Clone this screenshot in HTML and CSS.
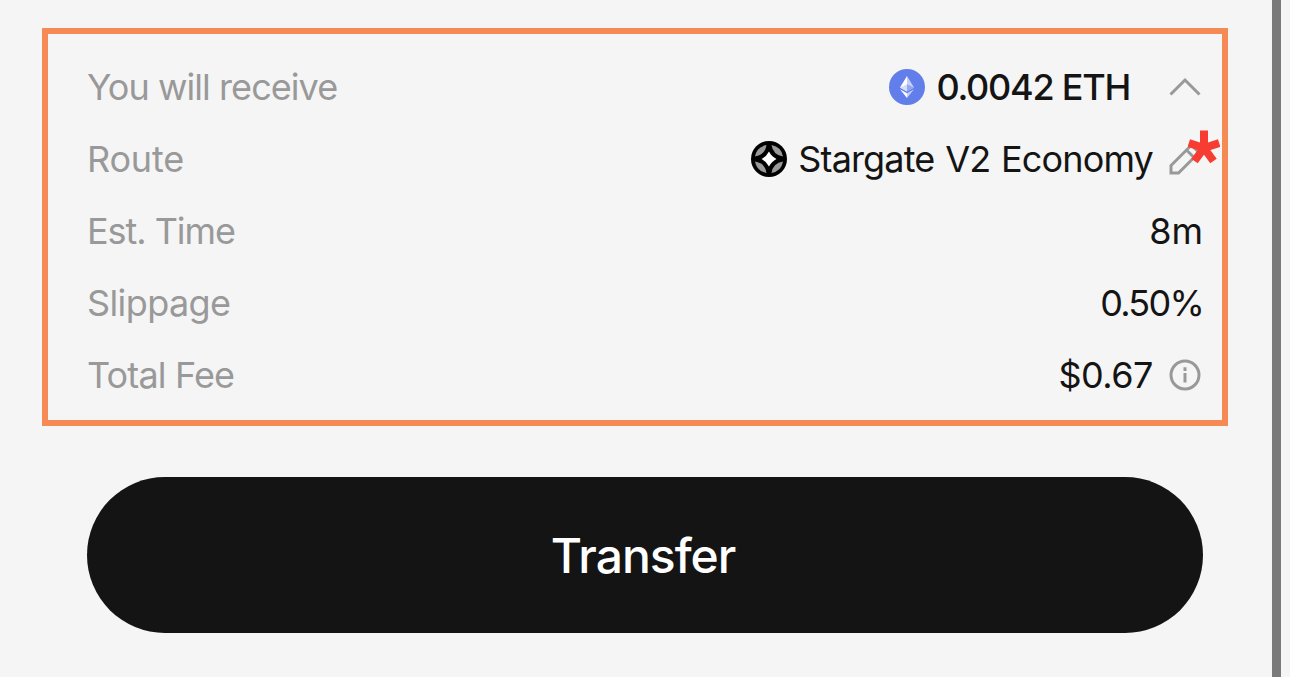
FILE: index.html
```html
<!DOCTYPE html>
<html lang="en">
<head>
<meta charset="UTF-8">
<title>Transfer</title>
<meta name="viewport" content="width=device-width, initial-scale=1.0">
<link rel="stylesheet" href="styles.css">
</head>
<body>
<div class="page">
<main class="panel">

<section class="details">
<div class="row">
  <span class="label receive">You will receive</span>
  <span class="value">
    <svg class="coin" viewBox="0 0 36 36">
      <circle cx="18" cy="18" r="18" fill="#627eea"/>
      <path d="M18 7L11 18.500 18 22.500z" fill="#fff"/>
      <path d="M18 7l7 11.500-7 4z" fill="#c5d0f8"/>
      <path d="M11 18.500l7-3.200v7.200z" fill="#d5ddfa"/>
      <path d="M25 18.500l-7-3.200v7.200z" fill="#92a6f1"/>
      <path d="M11 20.200l7 4v4.800z" fill="#fff"/>
      <path d="M25 20.200l-7 4v4.800z" fill="#c5d0f8"/>
    </svg>
    <span class="eth">0.0042 ETH</span>
    <svg class="icon chevron" viewBox="0 0 36 36"><path d="M3.500 25.500L18 11l14.500 14.500"/></svg>
  </span>
</div>
<div class="row">
  <span class="label route">Route</span>
  <span class="value">
    <svg class="coin" viewBox="0 0 36 36">
      <circle cx="18" cy="18" r="18" fill="#000"/>
      <g fill="#999">
        <path d="M4 15.500Q5.500 6 15.500 4 14 14 4 15.500z"/>
        <path d="M32 15.500Q30.500 6 20.500 4 22 14 32 15.500z"/>
        <path d="M4 20.500Q5.500 30 15.500 32 14 22 4 20.500z"/>
        <path d="M32 20.500Q30.500 30 20.500 32 22 22 32 20.500z"/>
      </g>
      <path d="M18 10.500Q20.500 15.500 25.500 18 20.500 20.500 18 25.500 15.500 20.500 10.500 18 15.500 15.500 18 10.500z" fill="#fff"/>
    </svg>
    <span class="bridge">Stargate V2 Economy</span>
    <span class="edit">
      <svg class="icon" viewBox="0 0 36 36"><path d="M4 32v-7.500L24.500 4l7.500 7.500L11.500 32zM19.500 9l7.500 7.500"/></svg>
      <svg class="mark" viewBox="0 0 32 34"><path d="M16 18V0.500M16 18L.8 13M16 18L6.500 31M16 18l9.500 13M16 18l15.200-5"/></svg>
    </span>
  </span>
</div>
<div class="row">
  <span class="label time">Est. Time</span>
  <span class="value">8m</span>
</div>
<div class="row">
  <span class="label slip">Slippage</span>
  <span class="value percent">0.50%</span>
</div>
<div class="row">
  <span class="label fee">Total Fee</span>
  <span class="value">
    <span class="cost">$0.67</span>
    <svg class="icon" viewBox="0 0 36 36"><circle cx="18" cy="18" r="14"/><path d="M18 16v9.500M18 10.300v3.600"/></svg>
  </span>
</div>
</section>

<button class="transfer" type="button">Transfer</button>
</main>
<div class="scrollbar"></div>
</div>
</body>
</html>
```

FILE: styles.css
```css
html, body {
height: 100%;
margin: 0;
overflow: hidden;
}
body {
background: #f5f5f5;
color: #141414;
font-family: Inter, "Liberation Sans", sans-serif;
}
.page {
display: flex;
height: 100%;
}
.panel {
flex: 1;
padding: 28px 44px 0 42px;
}
.scrollbar {
width: 9px;
margin-right: 9px;
background: #7a7a7a;
}
.details {
box-sizing: border-box;
height: 398px;
padding: 17px 19px 0 39px;
border: 6px solid #f58a55;
}
.row {
display: flex;
align-items: center;
justify-content: space-between;
height: 72px;
font-size: 36px;
line-height: 44px;
white-space: nowrap;
}
.label {
color: #999;
}
.receive { letter-spacing: -0.93px; }
.route { letter-spacing: -0.2px; }
.time { letter-spacing: -1.05px; }
.slip { letter-spacing: -0.6px; }
.fee { letter-spacing: -0.85px; }
.value {
display: flex;
align-items: center;
}
.coin {
width: 36px;
height: 36px;
margin-right: 11px;
}
.icon {
display: block;
width: 36px;
height: 36px;
margin-left: 14px;
fill: none;
stroke: #999;
stroke-width: 3;
}
.eth {
font-weight: 500;
letter-spacing: -1.25px;
}
.chevron {
margin-left: 37px;
}
.bridge {
letter-spacing: -0.85px;
word-spacing: 1.5px;
}
.percent { letter-spacing: -1.75px; }
.cost { letter-spacing: -0.5px; }
.edit {
position: relative;
}
/* red marker over the pencil */
.mark {
position: absolute;
top: -11px;
right: -17px;
width: 32px;
height: 34px;
fill: none;
stroke: #f73c31;
stroke-width: 8;
}
.transfer {
display: flex;
align-items: center;
justify-content: center;
width: 1116px;
height: 156px;
margin: 51px 0 0 45px;
padding: 1px 4px 0 0;
border: none;
border-radius: 78px;
background: #141414;
color: #fff;
font-family: inherit;
font-size: 48px;
font-weight: 500;
letter-spacing: -1px;
}
```
